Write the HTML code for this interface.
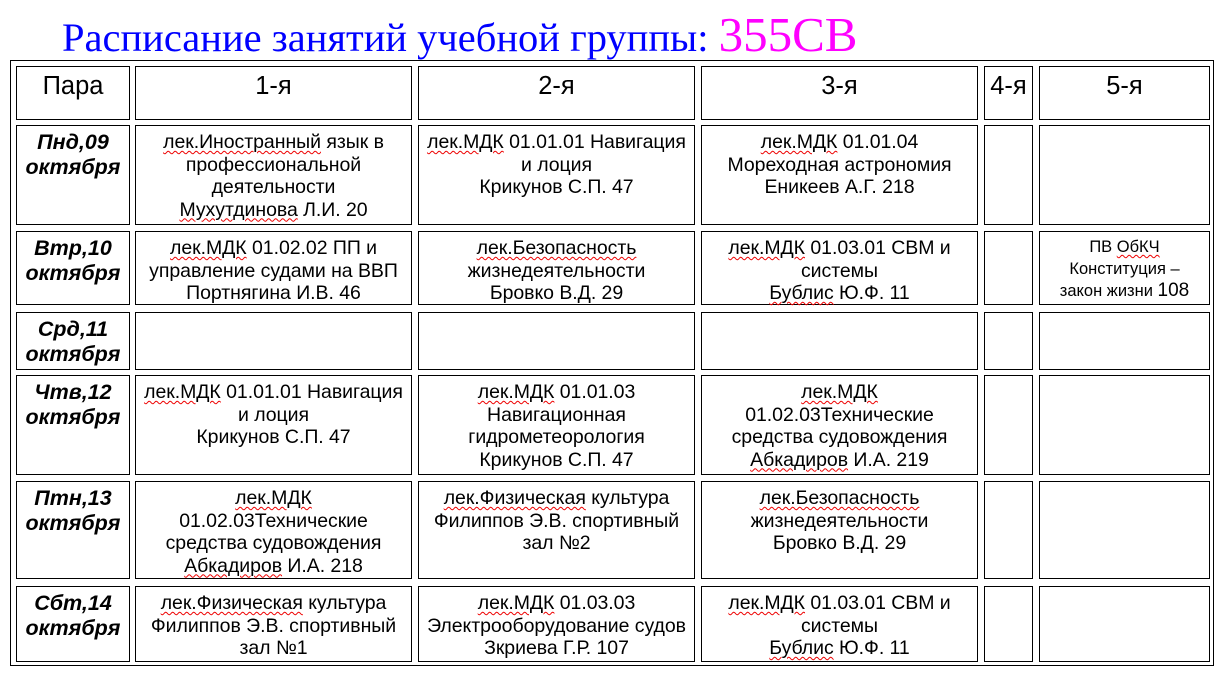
<!DOCTYPE html>
<html><head><meta charset="utf-8">
<style>
body{margin:0;width:1228px;height:677px;background:#fff;position:relative;overflow:hidden;font-family:"Liberation Sans",Arial,sans-serif;color:#000}
.t{position:absolute;left:62px;top:6px;font-family:"Liberation Serif",serif;font-size:40.5px;color:#0000ff;white-space:nowrap}
.t span{color:#ff00ff;font-size:49px}
.o{position:absolute;left:10px;top:60px;width:1204px;height:606px;border:1px solid #000;box-sizing:border-box}
.c{position:absolute;border:1px solid #000;box-sizing:border-box;text-align:center;font-size:19.5px;line-height:22.5px;padding-top:5px;white-space:nowrap;letter-spacing:-0.05px}
.h{font-size:25.5px;line-height:28px;padding-top:5px;letter-spacing:0}
.d{font-weight:bold;font-style:italic;font-size:21.5px;line-height:25px;padding-top:4px;letter-spacing:0}
.s{font-size:16.5px;line-height:21.5px;letter-spacing:0}
u{text-decoration:underline wavy #e00;text-decoration-thickness:1px;text-underline-offset:2px}
</style></head><body>
<div class="t">Расписание занятий учебной группы: <span>355СВ</span></div>
<div class="o"></div>

<div class="c h" style="left:16px;top:66px;width:114px;height:54px">Пара</div>
<div class="c h" style="left:135px;top:66px;width:277px;height:54px">1-я</div>
<div class="c h" style="left:418px;top:66px;width:277px;height:54px">2-я</div>
<div class="c h" style="left:701px;top:66px;width:277px;height:54px">3-я</div>
<div class="c h" style="left:984px;top:66px;width:49px;height:54px">4-я</div>
<div class="c h" style="left:1039px;top:66px;width:171px;height:54px">5-я</div>

<div class="c d" style="left:16px;top:125px;width:114px;height:100px">Пнд,09<br>октября</div>
<div class="c" style="left:135px;top:125px;width:277px;height:100px"><u>лек.Иностранный</u> язык в<br>профессиональной<br>деятельности<br><u>Мухутдинова</u> Л.И. 20</div>
<div class="c" style="left:418px;top:125px;width:277px;height:100px"><u>лек.МДК</u> 01.01.01 Навигация<br>и лоция<br>Крикунов С.П. 47</div>
<div class="c" style="left:701px;top:125px;width:277px;height:100px"><u>лек.МДК</u> 01.01.04<br>Мореходная астрономия<br>Еникеев А.Г. 218</div>
<div class="c" style="left:984px;top:125px;width:49px;height:100px"></div>
<div class="c" style="left:1039px;top:125px;width:171px;height:100px"></div>

<div class="c d" style="left:16px;top:231px;width:114px;height:74px">Втр,10<br>октября</div>
<div class="c" style="left:135px;top:231px;width:277px;height:74px"><u>лек.МДК</u> 01.02.02 ПП и<br>управление судами на ВВП<br>Портнягина И.В. 46</div>
<div class="c" style="left:418px;top:231px;width:277px;height:74px"><u>лек.Безопасность</u><br>жизнедеятельности<br>Бровко В.Д. 29</div>
<div class="c" style="left:701px;top:231px;width:277px;height:74px"><u>лек.МДК</u> 01.03.01 СВМ и<br>системы<br><u>Бублис</u> Ю.Ф. 11</div>
<div class="c" style="left:984px;top:231px;width:49px;height:74px"></div>
<div class="c s" style="left:1039px;top:231px;width:171px;height:74px;padding-top:5px">ПВ <u>ОбКЧ</u><br>Конституция –<br>закон жизни <span style="font-size:19px">108</span></div>

<div class="c d" style="left:16px;top:312px;width:114px;height:58px">Срд,11<br>октября</div>
<div class="c" style="left:135px;top:312px;width:277px;height:58px"></div>
<div class="c" style="left:418px;top:312px;width:277px;height:58px"></div>
<div class="c" style="left:701px;top:312px;width:277px;height:58px"></div>
<div class="c" style="left:984px;top:312px;width:49px;height:58px"></div>
<div class="c" style="left:1039px;top:312px;width:171px;height:58px"></div>

<div class="c d" style="left:16px;top:375px;width:114px;height:100px">Чтв,12<br>октября</div>
<div class="c" style="left:135px;top:375px;width:277px;height:100px"><u>лек.МДК</u> 01.01.01 Навигация<br>и лоция<br>Крикунов С.П. 47</div>
<div class="c" style="left:418px;top:375px;width:277px;height:100px"><u>лек.МДК</u> 01.01.03<br>Навигационная<br>гидрометеорология<br>Крикунов С.П. 47</div>
<div class="c" style="left:701px;top:375px;width:277px;height:100px"><u>лек.МДК</u><br>01.02.03Технические<br>средства судовождения<br><u>Абкадиров</u> И.А. 219</div>
<div class="c" style="left:984px;top:375px;width:49px;height:100px"></div>
<div class="c" style="left:1039px;top:375px;width:171px;height:100px"></div>

<div class="c d" style="left:16px;top:481px;width:114px;height:98px">Птн,13<br>октября</div>
<div class="c" style="left:135px;top:481px;width:277px;height:98px"><u>лек.МДК</u><br>01.02.03Технические<br>средства судовождения<br><u>Абкадиров</u> И.А. 218</div>
<div class="c" style="left:418px;top:481px;width:277px;height:98px"><u>лек.Физическая</u> культура<br>Филиппов Э.В. спортивный<br>зал №2</div>
<div class="c" style="left:701px;top:481px;width:277px;height:98px"><u>лек.Безопасность</u><br>жизнедеятельности<br>Бровко В.Д. 29</div>
<div class="c" style="left:984px;top:481px;width:49px;height:98px"></div>
<div class="c" style="left:1039px;top:481px;width:171px;height:98px"></div>

<div class="c d" style="left:16px;top:586px;width:114px;height:76px">Сбт,14<br>октября</div>
<div class="c" style="left:135px;top:586px;width:277px;height:76px"><u>лек.Физическая</u> культура<br>Филиппов Э.В. спортивный<br>зал №1</div>
<div class="c" style="left:418px;top:586px;width:277px;height:76px"><u>лек.МДК</u> 01.03.03<br>Электрооборудование судов<br>Зкриева Г.Р. 107</div>
<div class="c" style="left:701px;top:586px;width:277px;height:76px"><u>лек.МДК</u> 01.03.01 СВМ и<br>системы<br><u>Бублис</u> Ю.Ф. 11</div>
<div class="c" style="left:984px;top:586px;width:49px;height:76px"></div>
<div class="c" style="left:1039px;top:586px;width:171px;height:76px"></div>
</body></html>
